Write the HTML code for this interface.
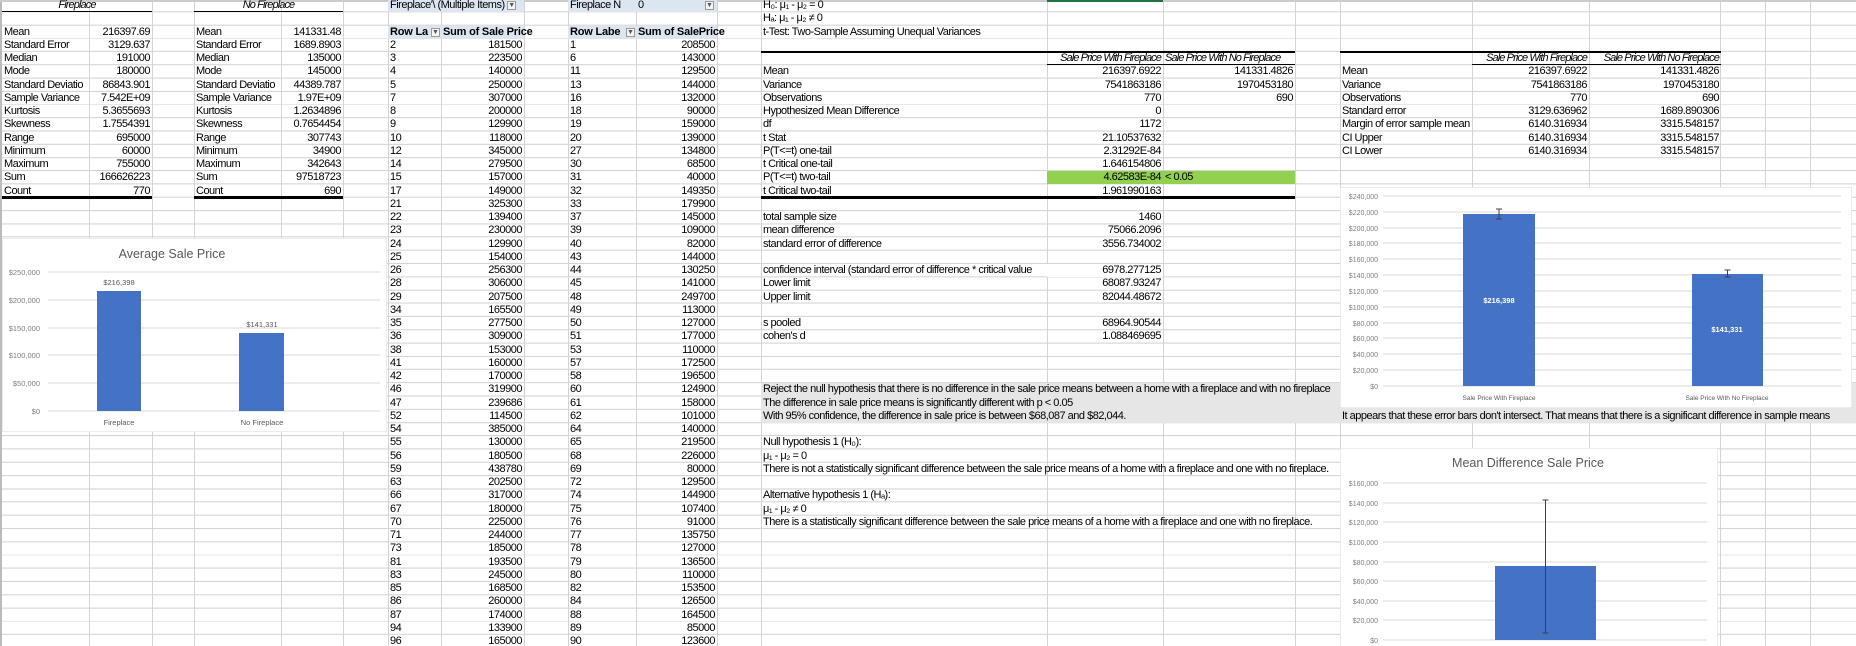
<!DOCTYPE html>
<html><head><meta charset="utf-8">
<style>
*{margin:0;padding:0;box-sizing:border-box}
html,body{width:1856px;height:646px;overflow:hidden;background:#fff}
body{position:relative;font-family:"Liberation Sans",sans-serif;font-size:11px;letter-spacing:-0.5px;color:#000;
background-image:repeating-linear-gradient(to bottom,transparent 0,transparent 12.25px,#d4d4d4 12.25px,#d4d4d4 13.25px);background-position:0 -1px}
.v{position:absolute;top:0;height:646px;width:1px;background:#d4d4d4}
.c{position:absolute;top:calc(var(--r)*13.25px - 14.25px);height:13.25px;line-height:13px;white-space:nowrap;padding:0 2px}
.R{text-align:right}
.A{left:2px;width:87px}.B{left:89px;width:63px}
.D{left:194px;width:87px}.E{left:281px;width:62px}
.G{left:388px;width:53px}.H{left:441px;width:83px}
.J{left:568px;width:68px}.K{left:636px;width:81px}
.M{left:761px;width:286px}.N{left:1047px;width:116px}.O{left:1163px;width:132px}
.Q{left:1340px;width:132px}.Rr{left:1472px;width:117px}.S{left:1589px;width:132px}
.blue{background:#dce6f1}
.b{font-weight:bold;letter-spacing:-0.2px}
.it{font-style:italic;letter-spacing:-0.9px}
.hl{position:absolute;background:#000}
.fi{display:inline-block;width:9px;height:9px;border:1px solid #999;background:#f4f4f4;font-size:7px;line-height:7px;text-align:center;color:#555;vertical-align:middle;letter-spacing:0}
svg{position:absolute}
svg text{font-family:"Liberation Sans",sans-serif;letter-spacing:0}
</style></head><body>
<div class="v" style="left:0;background:#bbb;width:2px"></div>
<div class="v" style="left:89px"></div><div class="v" style="left:152px"></div><div class="v" style="left:194px"></div>
<div class="v" style="left:281px"></div><div class="v" style="left:343px"></div><div class="v" style="left:388px"></div>
<div class="v" style="left:441px"></div><div class="v" style="left:524px"></div><div class="v" style="left:568px"></div>
<div class="v" style="left:636px"></div><div class="v" style="left:717px"></div><div class="v" style="left:761px"></div>
<div class="v" style="left:1047px"></div><div class="v" style="left:1163px"></div><div class="v" style="left:1295px"></div>
<div class="v" style="left:1340px"></div><div class="v" style="left:1472px"></div><div class="v" style="left:1589px"></div>
<div class="v" style="left:1720px"></div><div class="v" style="left:1765px"></div><div class="v" style="left:1810px"></div>
<div style="position:absolute;left:0;top:0;width:1856px;height:2px;background:#ccc"></div>
<div style="position:absolute;left:1047px;top:0;width:116px;height:2px;background:#217346"></div>

<div style="position:absolute;left:761px;top:383.25px;width:1095px;height:39.75px;background:#e7e6e6"></div>
<div style="position:absolute;left:1047px;top:171.25px;width:248px;height:13px;background:#92d050"></div>
<div class="c blue" style="--r:1;left:388px;width:136px"></div>
<div class="c blue" style="--r:1;left:568px;width:149px"></div>
<div class="c blue" style="--r:3;left:388px;width:136px"></div>
<div class="c blue" style="--r:3;left:568px;width:149px"></div>

<div class="hl" style="left:2px;top:11px;width:150px;height:1px"></div>
<div class="hl" style="left:194px;top:11px;width:149px;height:1px"></div>
<div class="hl" style="left:2px;top:196px;width:150px;height:3px"></div>
<div class="hl" style="left:194px;top:196px;width:149px;height:3px"></div>
<div class="hl" style="left:761px;top:51px;width:534px;height:2px"></div>
<div class="hl" style="left:1047px;top:64px;width:248px;height:1px"></div>
<div class="hl" style="left:761px;top:196px;width:534px;height:3px"></div>
<div class="hl" style="left:1340px;top:51px;width:381px;height:2px"></div>
<div class="hl" style="left:1472px;top:64px;width:249px;height:1px"></div>

<div class="c A it" style="--r:1;width:150px;text-align:center">Fireplace</div>
<div class="c D it" style="--r:1;width:149px;text-align:center">No Fireplace</div>
<div class="c A" style="--r:3">Mean</div><div class="c B R" style="--r:3">216397.69</div>
<div class="c A" style="--r:4">Standard Error</div><div class="c B R" style="--r:4">3129.637</div>
<div class="c A" style="--r:5">Median</div><div class="c B R" style="--r:5">191000</div>
<div class="c A" style="--r:6">Mode</div><div class="c B R" style="--r:6">180000</div>
<div class="c A" style="--r:7">Standard Deviatio</div><div class="c B R" style="--r:7">86843.901</div>
<div class="c A" style="--r:8">Sample Variance</div><div class="c B R" style="--r:8">7.542E+09</div>
<div class="c A" style="--r:9">Kurtosis</div><div class="c B R" style="--r:9">5.3655693</div>
<div class="c A" style="--r:10">Skewness</div><div class="c B R" style="--r:10">1.7554391</div>
<div class="c A" style="--r:11">Range</div><div class="c B R" style="--r:11">695000</div>
<div class="c A" style="--r:12">Minimum</div><div class="c B R" style="--r:12">60000</div>
<div class="c A" style="--r:13">Maximum</div><div class="c B R" style="--r:13">755000</div>
<div class="c A" style="--r:14">Sum</div><div class="c B R" style="--r:14">166626223</div>
<div class="c A" style="--r:15">Count</div><div class="c B R" style="--r:15">770</div>
<div class="c D" style="--r:3">Mean</div><div class="c E R" style="--r:3">141331.48</div>
<div class="c D" style="--r:4">Standard Error</div><div class="c E R" style="--r:4">1689.8903</div>
<div class="c D" style="--r:5">Median</div><div class="c E R" style="--r:5">135000</div>
<div class="c D" style="--r:6">Mode</div><div class="c E R" style="--r:6">145000</div>
<div class="c D" style="--r:7">Standard Deviatio</div><div class="c E R" style="--r:7">44389.787</div>
<div class="c D" style="--r:8">Sample Variance</div><div class="c E R" style="--r:8">1.97E+09</div>
<div class="c D" style="--r:9">Kurtosis</div><div class="c E R" style="--r:9">1.2634896</div>
<div class="c D" style="--r:10">Skewness</div><div class="c E R" style="--r:10">0.7654454</div>
<div class="c D" style="--r:11">Range</div><div class="c E R" style="--r:11">307743</div>
<div class="c D" style="--r:12">Minimum</div><div class="c E R" style="--r:12">34900</div>
<div class="c D" style="--r:13">Maximum</div><div class="c E R" style="--r:13">342643</div>
<div class="c D" style="--r:14">Sum</div><div class="c E R" style="--r:14">97518723</div>
<div class="c D" style="--r:15">Count</div><div class="c E R" style="--r:15">690</div>

<div class="c" style="--r:1;left:388px;width:136px">Fireplace'\ (Multiple Items) <span class="fi">&#9660;</span></div>
<div class="c" style="--r:1;left:568px;width:68px">Fireplace N</div>
<div class="c" style="--r:1;left:636px;width:81px">0<span class="fi" style="position:absolute;right:3px;top:2px">&#9660;</span></div>
<div class="c b" style="--r:3;left:388px;width:53px;overflow:hidden">Row La<span class="fi" style="position:absolute;right:1px;top:2px">&#9660;</span></div>
<div class="c b H" style="--r:3">Sum of Sale Price</div>
<div class="c b" style="--r:3;left:568px;width:68px;overflow:hidden">Row Labe<span class="fi" style="position:absolute;right:1px;top:2px">&#9660;</span></div>
<div class="c b K R" style="--r:3">Sum of SalePrice</div>

<div class="c G" style="--r:4">2</div><div class="c H R" style="--r:4">181500</div>
<div class="c G" style="--r:5">3</div><div class="c H R" style="--r:5">223500</div>
<div class="c G" style="--r:6">4</div><div class="c H R" style="--r:6">140000</div>
<div class="c G" style="--r:7">5</div><div class="c H R" style="--r:7">250000</div>
<div class="c G" style="--r:8">7</div><div class="c H R" style="--r:8">307000</div>
<div class="c G" style="--r:9">8</div><div class="c H R" style="--r:9">200000</div>
<div class="c G" style="--r:10">9</div><div class="c H R" style="--r:10">129900</div>
<div class="c G" style="--r:11">10</div><div class="c H R" style="--r:11">118000</div>
<div class="c G" style="--r:12">12</div><div class="c H R" style="--r:12">345000</div>
<div class="c G" style="--r:13">14</div><div class="c H R" style="--r:13">279500</div>
<div class="c G" style="--r:14">15</div><div class="c H R" style="--r:14">157000</div>
<div class="c G" style="--r:15">17</div><div class="c H R" style="--r:15">149000</div>
<div class="c G" style="--r:16">21</div><div class="c H R" style="--r:16">325300</div>
<div class="c G" style="--r:17">22</div><div class="c H R" style="--r:17">139400</div>
<div class="c G" style="--r:18">23</div><div class="c H R" style="--r:18">230000</div>
<div class="c G" style="--r:19">24</div><div class="c H R" style="--r:19">129900</div>
<div class="c G" style="--r:20">25</div><div class="c H R" style="--r:20">154000</div>
<div class="c G" style="--r:21">26</div><div class="c H R" style="--r:21">256300</div>
<div class="c G" style="--r:22">28</div><div class="c H R" style="--r:22">306000</div>
<div class="c G" style="--r:23">29</div><div class="c H R" style="--r:23">207500</div>
<div class="c G" style="--r:24">34</div><div class="c H R" style="--r:24">165500</div>
<div class="c G" style="--r:25">35</div><div class="c H R" style="--r:25">277500</div>
<div class="c G" style="--r:26">36</div><div class="c H R" style="--r:26">309000</div>
<div class="c G" style="--r:27">38</div><div class="c H R" style="--r:27">153000</div>
<div class="c G" style="--r:28">41</div><div class="c H R" style="--r:28">160000</div>
<div class="c G" style="--r:29">42</div><div class="c H R" style="--r:29">170000</div>
<div class="c G" style="--r:30">46</div><div class="c H R" style="--r:30">319900</div>
<div class="c G" style="--r:31">47</div><div class="c H R" style="--r:31">239686</div>
<div class="c G" style="--r:32">52</div><div class="c H R" style="--r:32">114500</div>
<div class="c G" style="--r:33">54</div><div class="c H R" style="--r:33">385000</div>
<div class="c G" style="--r:34">55</div><div class="c H R" style="--r:34">130000</div>
<div class="c G" style="--r:35">56</div><div class="c H R" style="--r:35">180500</div>
<div class="c G" style="--r:36">59</div><div class="c H R" style="--r:36">438780</div>
<div class="c G" style="--r:37">63</div><div class="c H R" style="--r:37">202500</div>
<div class="c G" style="--r:38">66</div><div class="c H R" style="--r:38">317000</div>
<div class="c G" style="--r:39">67</div><div class="c H R" style="--r:39">180000</div>
<div class="c G" style="--r:40">70</div><div class="c H R" style="--r:40">225000</div>
<div class="c G" style="--r:41">71</div><div class="c H R" style="--r:41">244000</div>
<div class="c G" style="--r:42">73</div><div class="c H R" style="--r:42">185000</div>
<div class="c G" style="--r:43">81</div><div class="c H R" style="--r:43">193500</div>
<div class="c G" style="--r:44">83</div><div class="c H R" style="--r:44">245000</div>
<div class="c G" style="--r:45">85</div><div class="c H R" style="--r:45">168500</div>
<div class="c G" style="--r:46">86</div><div class="c H R" style="--r:46">260000</div>
<div class="c G" style="--r:47">87</div><div class="c H R" style="--r:47">174000</div>
<div class="c G" style="--r:48">94</div><div class="c H R" style="--r:48">133900</div>
<div class="c G" style="--r:49">96</div><div class="c H R" style="--r:49">165000</div>

<div class="c J" style="--r:4">1</div><div class="c K R" style="--r:4">208500</div>
<div class="c J" style="--r:5">6</div><div class="c K R" style="--r:5">143000</div>
<div class="c J" style="--r:6">11</div><div class="c K R" style="--r:6">129500</div>
<div class="c J" style="--r:7">13</div><div class="c K R" style="--r:7">144000</div>
<div class="c J" style="--r:8">16</div><div class="c K R" style="--r:8">132000</div>
<div class="c J" style="--r:9">18</div><div class="c K R" style="--r:9">90000</div>
<div class="c J" style="--r:10">19</div><div class="c K R" style="--r:10">159000</div>
<div class="c J" style="--r:11">20</div><div class="c K R" style="--r:11">139000</div>
<div class="c J" style="--r:12">27</div><div class="c K R" style="--r:12">134800</div>
<div class="c J" style="--r:13">30</div><div class="c K R" style="--r:13">68500</div>
<div class="c J" style="--r:14">31</div><div class="c K R" style="--r:14">40000</div>
<div class="c J" style="--r:15">32</div><div class="c K R" style="--r:15">149350</div>
<div class="c J" style="--r:16">33</div><div class="c K R" style="--r:16">179900</div>
<div class="c J" style="--r:17">37</div><div class="c K R" style="--r:17">145000</div>
<div class="c J" style="--r:18">39</div><div class="c K R" style="--r:18">109000</div>
<div class="c J" style="--r:19">40</div><div class="c K R" style="--r:19">82000</div>
<div class="c J" style="--r:20">43</div><div class="c K R" style="--r:20">144000</div>
<div class="c J" style="--r:21">44</div><div class="c K R" style="--r:21">130250</div>
<div class="c J" style="--r:22">45</div><div class="c K R" style="--r:22">141000</div>
<div class="c J" style="--r:23">48</div><div class="c K R" style="--r:23">249700</div>
<div class="c J" style="--r:24">49</div><div class="c K R" style="--r:24">113000</div>
<div class="c J" style="--r:25">50</div><div class="c K R" style="--r:25">127000</div>
<div class="c J" style="--r:26">51</div><div class="c K R" style="--r:26">177000</div>
<div class="c J" style="--r:27">53</div><div class="c K R" style="--r:27">110000</div>
<div class="c J" style="--r:28">57</div><div class="c K R" style="--r:28">172500</div>
<div class="c J" style="--r:29">58</div><div class="c K R" style="--r:29">196500</div>
<div class="c J" style="--r:30">60</div><div class="c K R" style="--r:30">124900</div>
<div class="c J" style="--r:31">61</div><div class="c K R" style="--r:31">158000</div>
<div class="c J" style="--r:32">62</div><div class="c K R" style="--r:32">101000</div>
<div class="c J" style="--r:33">64</div><div class="c K R" style="--r:33">140000</div>
<div class="c J" style="--r:34">65</div><div class="c K R" style="--r:34">219500</div>
<div class="c J" style="--r:35">68</div><div class="c K R" style="--r:35">226000</div>
<div class="c J" style="--r:36">69</div><div class="c K R" style="--r:36">80000</div>
<div class="c J" style="--r:37">72</div><div class="c K R" style="--r:37">129500</div>
<div class="c J" style="--r:38">74</div><div class="c K R" style="--r:38">144900</div>
<div class="c J" style="--r:39">75</div><div class="c K R" style="--r:39">107400</div>
<div class="c J" style="--r:40">76</div><div class="c K R" style="--r:40">91000</div>
<div class="c J" style="--r:41">77</div><div class="c K R" style="--r:41">135750</div>
<div class="c J" style="--r:42">78</div><div class="c K R" style="--r:42">127000</div>
<div class="c J" style="--r:43">79</div><div class="c K R" style="--r:43">136500</div>
<div class="c J" style="--r:44">80</div><div class="c K R" style="--r:44">110000</div>
<div class="c J" style="--r:45">82</div><div class="c K R" style="--r:45">153500</div>
<div class="c J" style="--r:46">84</div><div class="c K R" style="--r:46">126500</div>
<div class="c J" style="--r:47">88</div><div class="c K R" style="--r:47">164500</div>
<div class="c J" style="--r:48">89</div><div class="c K R" style="--r:48">85000</div>
<div class="c J" style="--r:49">90</div><div class="c K R" style="--r:49">123600</div>

<div class="c M" style="--r:1">H₀: μ₁ - μ₂ = 0</div>
<div class="c M" style="--r:2">Hₐ: μ₁ - μ₂ ≠ 0</div>
<div class="c M" style="--r:3">t-Test: Two-Sample Assuming Unequal Variances</div>
<div class="c N R it" style="--r:5">Sale Price With Fireplace</div>
<div class="c O it" style="--r:5">Sale Price With No Fireplace</div>
<div class="c M" style="--r:6">Mean</div><div class="c N R" style="--r:6">216397.6922</div><div class="c O R" style="--r:6">141331.4826</div>
<div class="c M" style="--r:7">Variance</div><div class="c N R" style="--r:7">7541863186</div><div class="c O R" style="--r:7">1970453180</div>
<div class="c M" style="--r:8">Observations</div><div class="c N R" style="--r:8">770</div><div class="c O R" style="--r:8">690</div>
<div class="c M" style="--r:9">Hypothesized Mean Difference</div><div class="c N R" style="--r:9">0</div>
<div class="c M" style="--r:10">df</div><div class="c N R" style="--r:10">1172</div>
<div class="c M" style="--r:11">t Stat</div><div class="c N R" style="--r:11">21.10537632</div>
<div class="c M" style="--r:12">P(T&lt;=t) one-tail</div><div class="c N R" style="--r:12">2.31292E-84</div>
<div class="c M" style="--r:13">t Critical one-tail</div><div class="c N R" style="--r:13">1.646154806</div>
<div class="c M" style="--r:14">P(T&lt;=t) two-tail</div><div class="c N R" style="--r:14">4.62583E-84</div><div class="c O" style="--r:14">&lt; 0.05</div>
<div class="c M" style="--r:15">t Critical two-tail</div><div class="c N R" style="--r:15">1.961990163</div>

<div class="c M" style="--r:17">total sample size</div><div class="c N R" style="--r:17">1460</div>
<div class="c M" style="--r:18">mean difference</div><div class="c N R" style="--r:18">75066.2096</div>
<div class="c M" style="--r:19">standard error of difference</div><div class="c N R" style="--r:19">3556.734002</div>
<div class="c M" style="--r:21">confidence interval (standard error of difference * critical value</div><div class="c N R" style="--r:21;background:#fff">6978.277125</div>
<div class="c M" style="--r:22">Lower limit</div><div class="c N R" style="--r:22">68087.93247</div>
<div class="c M" style="--r:23">Upper limit</div><div class="c N R" style="--r:23">82044.48672</div>
<div class="c M" style="--r:25">s pooled</div><div class="c N R" style="--r:25">68964.90544</div>
<div class="c M" style="--r:26">cohen's d</div><div class="c N R" style="--r:26">1.088469695</div>

<div class="c M" style="--r:30">Reject the null hypothesis that there is no difference in the sale price means between a home with a fireplace and with no fireplace</div>
<div class="c M" style="--r:31">The difference in sale price means is significantly different with p &lt; 0.05</div>
<div class="c M" style="--r:32">With 95% confidence, the difference in sale price is between $68,087 and $82,044.</div>
<div class="c M" style="--r:34">Null hypothesis 1 (H₀):</div>
<div class="c M" style="--r:35">μ₁ - μ₂ = 0</div>
<div class="c M" style="--r:36">There is not a statistically significant difference between the sale price means of a home with a fireplace and one with no fireplace.</div>
<div class="c M" style="--r:38">Alternative hypothesis 1 (Hₐ):</div>
<div class="c M" style="--r:39">μ₁ - μ₂ ≠ 0</div>
<div class="c M" style="--r:40">There is a statistically significant difference between the sale price means of a home with a fireplace and one with no fireplace.</div>

<div class="c Rr R it" style="--r:5">Sale Price With Fireplace</div>
<div class="c S R it" style="--r:5">Sale Price With No Fireplace</div>
<div class="c Q" style="--r:6">Mean</div><div class="c Rr R" style="--r:6">216397.6922</div><div class="c S R" style="--r:6">141331.4826</div>
<div class="c Q" style="--r:7">Variance</div><div class="c Rr R" style="--r:7">7541863186</div><div class="c S R" style="--r:7">1970453180</div>
<div class="c Q" style="--r:8">Observations</div><div class="c Rr R" style="--r:8">770</div><div class="c S R" style="--r:8">690</div>
<div class="c Q" style="--r:9">Standard error</div><div class="c Rr R" style="--r:9">3129.636962</div><div class="c S R" style="--r:9">1689.890306</div>
<div class="c Q" style="--r:10">Margin of error sample mean</div><div class="c Rr R" style="--r:10">6140.316934</div><div class="c S R" style="--r:10">3315.548157</div>
<div class="c Q" style="--r:11">CI Upper</div><div class="c Rr R" style="--r:11">6140.316934</div><div class="c S R" style="--r:11">3315.548157</div>
<div class="c Q" style="--r:12">CI Lower</div><div class="c Rr R" style="--r:12">6140.316934</div><div class="c S R" style="--r:12">3315.548157</div>
<div class="c" style="--r:32;left:1340px;width:516px">It appears that these error bars don't intersect. That means that there is a significant difference in sample means</div>

<svg style="left:2px;top:238px" width="385" height="194" viewBox="0 0 385 194">
<rect x="0" y="0" width="385" height="194" fill="#fff" stroke="#d9d9d9"/>
<text x="170" y="20" font-size="12.5" fill="#595959" text-anchor="middle">Average Sale Price</text>
<g stroke="#d9d9d9" stroke-width="1">
<line x1="46" y1="34" x2="378" y2="34"/><line x1="46" y1="62" x2="378" y2="62"/><line x1="46" y1="90" x2="378" y2="90"/>
<line x1="46" y1="117" x2="378" y2="117"/><line x1="46" y1="145" x2="378" y2="145"/><line x1="46" y1="173" x2="378" y2="173"/></g>
<g font-size="7.5" fill="#7f7f7f" text-anchor="end">
<text x="38" y="37">$250,000</text><text x="38" y="65">$200,000</text><text x="38" y="93">$150,000</text>
<text x="38" y="120">$100,000</text><text x="38" y="148">$50,000</text><text x="38" y="176">$0</text></g>
<rect x="95" y="53" width="44" height="120" fill="#4472c4"/>
<rect x="237" y="95" width="45" height="78" fill="#4472c4"/>
<g font-size="7.5" fill="#595959" text-anchor="middle">
<text x="117" y="47">$216,398</text><text x="260" y="89">$141,331</text>
<text x="117" y="187">Fireplace</text><text x="260" y="187">No Fireplace</text></g>
</svg>

<svg style="left:1340px;top:187px" width="512" height="221" viewBox="0 0 512 221">
<rect x="0" y="0" width="512" height="221" fill="#fff" stroke="#d9d9d9"/>
<g stroke="#d9d9d9">
<line x1="43" y1="9" x2="501" y2="9"/><line x1="43" y1="25" x2="501" y2="25"/><line x1="43" y1="41" x2="501" y2="41"/>
<line x1="43" y1="56" x2="501" y2="56"/><line x1="43" y1="72" x2="501" y2="72"/><line x1="43" y1="88" x2="501" y2="88"/>
<line x1="43" y1="104" x2="501" y2="104"/><line x1="43" y1="120" x2="501" y2="120"/><line x1="43" y1="136" x2="501" y2="136"/>
<line x1="43" y1="151" x2="501" y2="151"/><line x1="43" y1="167" x2="501" y2="167"/><line x1="43" y1="183" x2="501" y2="183"/>
<line x1="43" y1="199" x2="501" y2="199"/></g>
<g font-size="7" fill="#7f7f7f" text-anchor="end">
<text x="38" y="12">$240,000</text><text x="38" y="28">$220,000</text><text x="38" y="44">$200,000</text>
<text x="38" y="59">$180,000</text><text x="38" y="75">$160,000</text><text x="38" y="91">$140,000</text>
<text x="38" y="107">$120,000</text><text x="38" y="123">$100,000</text><text x="38" y="139">$80,000</text>
<text x="38" y="154">$60,000</text><text x="38" y="170">$40,000</text><text x="38" y="186">$20,000</text><text x="38" y="202">$0</text></g>
<rect x="123" y="27" width="72" height="172" fill="#4472c4"/>
<rect x="352" y="87" width="71" height="112" fill="#4472c4"/>
<g stroke="#404040" stroke-width="1"><line x1="159" y1="22" x2="159" y2="32"/><line x1="156" y1="22" x2="162" y2="22"/><line x1="156" y1="32" x2="162" y2="32"/>
<line x1="387.5" y1="83" x2="387.5" y2="90"/><line x1="384.5" y1="83" x2="390.5" y2="83"/><line x1="384.5" y1="90" x2="390.5" y2="90"/></g>
<g font-size="7.5" fill="#fff" text-anchor="middle" font-weight="bold"><text x="159" y="116">$216,398</text><text x="387" y="145">$141,331</text></g>
<g font-size="6.5" fill="#595959" text-anchor="middle"><text x="159" y="213">Sale Price With Fireplace</text><text x="387" y="213">Sale Price With No Fireplace</text></g>
</svg>

<svg style="left:1340px;top:448px" width="378" height="198" viewBox="0 0 378 198">
<rect x="0" y="0" width="378" height="200" fill="#fff" stroke="#d9d9d9"/>
<text x="188" y="19" font-size="12.5" fill="#595959" text-anchor="middle">Mean Difference Sale Price</text>
<g stroke="#d9d9d9">
<line x1="43" y1="35" x2="367" y2="35"/><line x1="43" y1="55" x2="367" y2="55"/><line x1="43" y1="74" x2="367" y2="74"/>
<line x1="43" y1="94" x2="367" y2="94"/><line x1="43" y1="114" x2="367" y2="114"/><line x1="43" y1="133" x2="367" y2="133"/>
<line x1="43" y1="153" x2="367" y2="153"/><line x1="43" y1="172" x2="367" y2="172"/><line x1="43" y1="192" x2="367" y2="192"/></g>
<g font-size="7" fill="#7f7f7f" text-anchor="end">
<text x="38" y="38">$160,000</text><text x="38" y="58">$140,000</text><text x="38" y="77">$120,000</text>
<text x="38" y="97">$100,000</text><text x="38" y="117">$80,000</text><text x="38" y="136">$60,000</text>
<text x="38" y="156">$40,000</text><text x="38" y="175">$20,000</text><text x="38" y="195">$0</text></g>
<rect x="155" y="118" width="101" height="74" fill="#4472c4"/>
<g stroke="#404040"><line x1="205.5" y1="52" x2="205.5" y2="185"/><line x1="202.5" y1="52" x2="208.5" y2="52"/><line x1="202.5" y1="185" x2="208.5" y2="185"/></g>
</svg>
</body></html>
